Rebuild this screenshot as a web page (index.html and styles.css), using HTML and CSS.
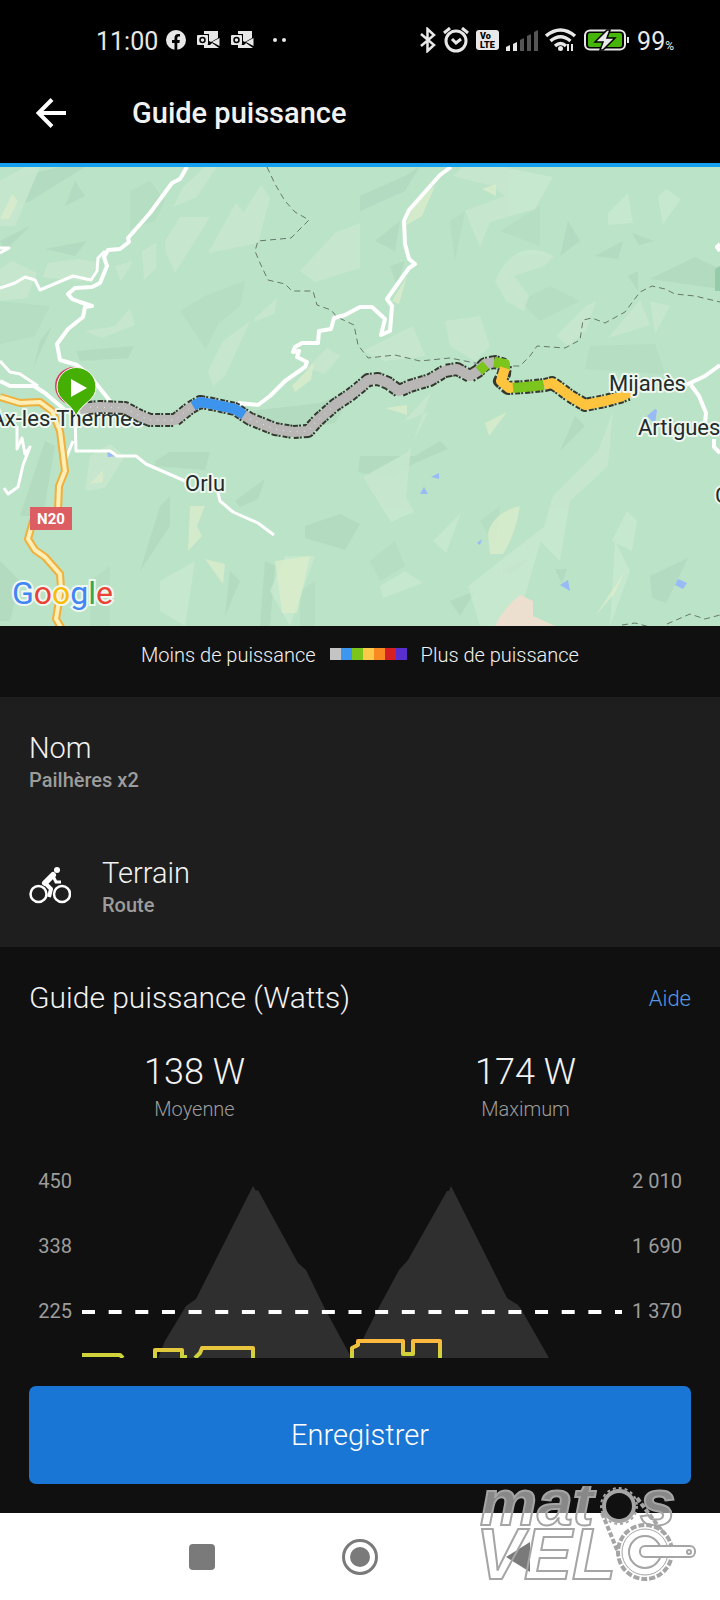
FILE: index.html
```html
<!DOCTYPE html>
<html lang="fr">
<head>
    <meta charset="UTF-8">
    <meta name="viewport" content="width=device-width, initial-scale=1.0">
    <title>Guide puissance</title>
    <link rel="stylesheet" href="styles.css">
</head>
<body>
    <div class="status-bar">
        <div class="status-left">
            <span class="clock">11:00</span>
            <svg width="20" height="20" viewBox="0 0 20 20"><circle cx="10" cy="10" r="10" fill="#e8e8e8"/><path d="M8.500 20v-7H6v-3h2.500V8c0-2.600 1.500-4 3.800-4 .8 0 1.700.1 1.700.1v2.500h-1.200c-1.100 0-1.500.7-1.500 1.400v2h2.500l-.4 3h-2.100v7z" fill="#000"/></svg>
            <svg class="mail" width="23" height="18" viewBox="0 0 23 18"><use href="#outlook"/></svg>
            <svg class="mail" width="23" height="18" viewBox="0 0 23 18">
                <g id="outlook">
                    <path d="M7 0h14v7l-7 4-2-1V3H7zM7 14h6l2-2 7 5H7z" fill="#e8e8e8"/>
                    <path d="M22.500 7v8L15 11z" fill="#e8e8e8"/>
                    <rect x="0" y="4" width="11" height="10" rx="1" fill="#e8e8e8"/>
                    <circle cx="5.500" cy="9" r="2.500" fill="none" stroke="#000" stroke-width="1.500"/>
                </g>
            </svg>
            <svg class="dots" width="16" height="6" viewBox="0 0 16 6" fill="#e8e8e8"><circle cx="3" cy="3" r="2"/><circle cx="12" cy="3" r="2"/></svg>
        </div>
        <div class="status-right">
            <svg width="16" height="26" viewBox="0 0 16 26" fill="none" stroke="#e8e8e8" stroke-width="2.500"><path d="M1 7l13 11-6.500 6V2L14 8 1 19"/></svg>
            <svg width="26" height="26" viewBox="0 0 26 26" fill="none" stroke="#e8e8e8" stroke-width="3"><circle cx="13" cy="14" r="10"/><path d="M1 6l6-5M25 6l-6-5M9 12l4 4 5-4"/></svg>
            <svg width="23" height="20" viewBox="0 0 23 20"><rect width="23" height="20" rx="3" fill="#e8e8e8"/><text class="volte" x="4" y="9">Vo</text><text class="volte" x="4" y="18">LTE</text></svg>
            <svg width="32" height="21" viewBox="0 0 32 21"><path d="M0 17l4-2v6H0zM7 14l4-2v9H7z" fill="#e8e8e8"/><path d="M14 10l4-2v13h-4zM21 6l4-2v17h-4zM28 2l4-2v21h-4z" fill="#555"/></svg>
            <svg width="32" height="24" viewBox="0 0 32 24" fill="none" stroke="#e8e8e8" stroke-width="3.500"><path d="M1 8Q15.500-4 30 8M5.500 13q10-8.500 20 0M10 18q5.500-5 11 0"/><circle cx="15.500" cy="20.500" r="2.500" fill="#e8e8e8" stroke="none"/><path d="M23 16v7M27 16v7" stroke-width="2"/></svg>
            <svg width="46" height="22" viewBox="0 0 46 22"><rect x="1" y="1.500" width="40" height="19" rx="5" fill="none" stroke="#e8e8e8" stroke-width="2"/><rect x="4" y="4" width="34" height="14" rx="2" fill="#46b50a"/><rect x="43" y="8" width="2" height="6" fill="#e8e8e8"/><path d="M23 1L11 13h8l-3 8h3l12-12h-8l3-8z" fill="#e8e8e8" stroke="#000" stroke-width="1.500"/></svg>
            <span class="battery">99<small>%</small></span>
        </div>
    </div>

    <header class="app-header">
        <button class="back" type="button" aria-label="Retour">
            <svg width="30" height="30" viewBox="0 0 30 30" fill="none" stroke="#fff" stroke-width="4"><path d="M30 15H4M16 1.500L2.500 15 16 28.500"/></svg>
        </button>
        <h1>Guide puissance</h1>
    </header>

    <!-- Route map -->
    <svg class="map" viewBox="0 166 720 459" role="img" aria-label="Carte du parcours">
        <rect y="166" width="720" height="459" fill="#bbe3c7"/>

        <!-- Terrain relief -->
        <g fill="#acd6bb" opacity="0.55">
            <path d="M0 180L60 166h25L30 200 0 210zM45 248l42-8-12 15zM0 240l30-15-25 25zM76 350l58-5-6 12-48 3zM40 340l12-15-18 40zM75 180l10 15-20 10z"/>
            <path d="M360 195l45-20 15-10-15 25-45 20zM375 240l25-20-5 30zM390 265l15-5-8 25zM595 255l28-15-5 18zM632 232l22 8-15 4zM650 278l70 10v-20l-25-12zM628 275l10-5v20zM580 240l-12-20-8 35z"/>
            <path d="M155 460l15-9h40l-5 18-50-4zM235 500l30-22-7 20-18 8zM305 525l35-12 20 10-15 26-40-12zM250 410l70-8 35-15-20 35-50 10zM20 515l25-75 10 5-12 70zM160 505l10-10v30l-30 45z"/>
            <path d="M360 455h55l25-15 8 8-35 15-20 15-35-7zM500 570l28-12-15 15zM555 568h12l-5 15zM450 600l25-10-15 25zM265 560l10 5-5 60h-10zM230 570l10 10-15 35zM0 560l20 20-10 40H0zM650 575l38-18-22 45-14-5zM560 450l25-25-10-10z"/>
        </g>
        <g fill="#b3dcc1" opacity="0.7">
            <path d="M130 190l20-10 15 20-10 20-25 8zM180 310l25-15 40-15-5 25-22 18-12 25zM0 300l50 5-15 30-35 8zM500 230l40-25v40zM520 300l30-15 30 15-40 20zM590 345l65-2 10 30-80-5zM450 220l15-10-10 50zM90 580l20-15v60H90zM480 520l20-15-5 40zM370 560l25-20 10 25-25 15zM300 590l15-10v45h-15z"/>
        </g>
        <g fill="#c9e9cf" opacity="0.8">
            <path d="M208 252l28-50 8 9 17-27 9 13-12 45zM165 240l15-24h30l-35 56-9-20zM142 250l14-8v25l-12 12zM173 206l10-20 22-20h12l-20 30zM0 180l25-14h15L15 225H0z"/>
            <path d="M48 262l30-4 20 3-10 20-45-5zM0 268l12-8 25 12-10 25-27 3zM85 330l30-5 15-18 5 17-33 13zM115 265l18-5-12 20zM213 385l-5-15 15-30 27-20-25 55zM255 317l22-20-3 16-20 8zM300 270l35-38 25-10v45l-45 14zM340 355l-15 18-18-6 20-20z"/>
            <path d="M465 210l40-15-12-10-40-10 10-9h40l50 10-18 32-45 13-10 25zM495 280q20-45 59-25l-10 10-30 10 15 20-5 15-18-10zM608 212l20-20 5 30-25 2zM658 196l8-8 15 10-18 25zM445 320l35-5 10 30-15 15-25-15zM556 335l30-30 10-5-10 30-18 15zM608 337l32-38 10 25zM650 300l20 5-15 28z"/>
            <path d="M363 350l50-25 12 30-40 5zM363 476l45-25 20-40-25 10 28-30-20 55-5 50 8 15-23 10zM545 525l-20 70-25 30h-20l-12-40zM553 495l45-45 15-40-5 55-38 35-10 60-20-20zM612 540l15-30 10 10-5 30zM380 585l25-15 18 12-40 15zM433 540l28-28-15 40zM160 580l35-20-10 65-25-15zM615 540l15 30-20 55zM270 590l15-35h30l-25 70zM90 455l20-12 15 12-20 32-20 3z"/>
        </g>
        <g fill="#d9eccb" opacity="0.8">
            <path d="M0 218l12-25 6 7-9 18zM405 225l10-25 20-15-13 30zM482 188l14-5v12zM392 300l15-25-8 28zM292 385l22-23-3 17-16 12zM190 505h15l-8 20 5 10-14 15zM90 483l13-14v12zM488 532q5-20 32-27-5 30-17 48h-13zM485 422l22-11-18 24zM205 558l20 5-2 20zM275 560l35-5-13 57h-15zM595 615l30-45-10 22zM385 407l22-3v10z"/>
        </g>
        <path d="M495 625q8-17 25-31l13 6v15l22 10z" fill="#ecdfd0"/>
        <path d="M715 268l5-3v25h-5z" fill="#96cbaa"/>
        <path d="M431 476l8-4v6zM420 493l4-7 4 7zM477 542l5-4-2 6zM560 584l8-5 2 11zM678 578l9 4-4 6-8-4zM647 415l8-7 2 1-2 14zM107 451h4l7 4-10 1z" fill="#98baf5"/>

        <!-- Borders -->
        <g fill="none" stroke="#68776c" stroke-width="1" stroke-dasharray="6 4">
            <path d="M267 166l8 17 10 17 10 11 14 8-18 18-33 3-3 10 5 12 8 17 17 4 7 7h21l4 14 14 5 6 7 17 8 4 20 10 13 27-3 25 6 30-3 40 8h30l10-10 7-10 28 2 15-8 3-20 9-2 13 5 20-11 15-20 12-6 13 3 10 5 20 2 25 6"/>
            <path d="M622 624l13-2 15 4M667 623l23-10 15 5 15-4"/>
        </g>

        <!-- Small roads -->
        <g class="road">
            <path d="M187 166l-7 12-8 4-22 30-22 25 1 4-9 7-12 1-4 7 3 9-7 17-8 4-17 1-7 6 4 5 8 3 12 4-7 1-2 10-15 12-11 15 3 16 17 5 13 11 20 25"/>
            <path d="M238 402l20 2 12-9 15-15 20-14 2-5-10-5 2-6-6 1 2-5 7-4h16l1-12 12-2 3-11 11-3 15-8h12l13 12-4 16 9-4 2-25-5-7 12-17 10-14 6-4-6-5-4-15-1-23 5-11 31-35 11-8"/>
            <path d="M0 380l10 5h24l11 7 20 17M686 384l19-9 15-11M691 384l8 11 7 17-1 10M714 438v8l6 6M720 250l-3-4 3-3"/>
        </g>
        <g class="road thin">
            <path d="M105 250l-7 7-1 13-6 9-18-4-33 14-5-10-10-3-10 6-15 5M0 247h9l-9 5M0 360l10 11 10 2 18 12M17 425v23l5-11 3 16 5-7-7 18-5 22-10 7-4-6M73 440l-8 20M75 415l1 35h34l7 5h19l10 8 39 17M218 492l2 8 13 11 25 11 16 12"/>
        </g>

        <!-- Main road -->
        <path class="road n20-edge" d="M0 396l20 6 20-1 12 9 8 20 5 40-6 15-1 25-25 10-5 18 7 11 10 7 15 17 1 15-5 30 6 10"/>
        <path class="road n20-fill" d="M0 396l20 6 20-1 12 9 8 20 5 40-6 15-1 25-25 10-5 18 7 11 10 7 15 17 1 15-5 30 6 10"/>
        <rect x="30" y="506" width="42" height="23" fill="#dc5d62"/>
        <text class="shield" x="51" y="523">N20</text>

        <text class="place" x="143" y="425" text-anchor="end">Ax-les-Thermes</text>

        <!-- Power track: dark edge first, coloured segments on top -->
        <g class="track">
            <path class="track-edge" d="M88 407l12-1 25 1 15 8 10 4h25l15-12 10-6 12 2 23 5 15 10 25 10 18 3 15-1 10-11 17-15 15-10 10-8 8-7 10-1 10 4 11 8 11-5 20-6 15-9 12-2 13 7 8-5 7-7 10-2 10 3-1 9-4 7 8 7 17-1 20-2 7-2 6 4 12 9 15 9 20-4 15-4 8-3"/>
            <path stroke="#b9b6b6" d="M80 408l20-2 25 1 15 8 10 4h25l15-12 10-6 12 2 23 5 15 10 25 10 18 3 15-1 10-11 17-15 15-10 10-8 8-7 10-1 10 4 11 8 11-5 20-6 15-9 12-2 13 7 8-5 7-7 10-2"/>
            <path stroke="#3d94ec" d="M193 405l7-4 12 2 23 5 9 6"/>
            <path stroke="#7bc51c" d="M479 370l7-6M494 361l11 2v7"/>
            <path stroke="#ffc43d" d="M505 367l-4 13 8 7 6-1"/>
            <path stroke="#7bc51c" d="M513 387l12-1 19-2"/>
            <path stroke="#ffc43d" d="M544 384l8-2 6 4 12 9 15 9 20-4 15-4 10-5"/>
            <path class="track-dots" d="M90 406l35 1 15 8 10 4h25l15-12M250 418l25 10 18 3 15-1 10-11 17-15"/>
        </g>

        <text class="place" x="185" y="490">Orlu</text>
        <text class="place" x="609" y="390">Mijanès</text>
        <text class="place" x="638" y="434">Artigues</text>
        <text class="place" x="715" y="502">C</text>

        <!-- Start marker -->
        <circle cx="74" cy="385" r="18" fill="#fff" stroke="#dd3d60" stroke-width="2"/>
        <path d="M76 415C71 401 57 400 57 386a19 19 0 0 1 39 0c0 14-14 15-20 29z" fill="#46af04" stroke="#fff" stroke-width="1"/>
        <path d="M71 378l16 9-16 9z" fill="#fff"/>

        <text class="google" x="12" y="603"><tspan fill="#4285f4">G</tspan><tspan fill="#ea4335">o</tspan><tspan fill="#fbbc05">o</tspan><tspan fill="#4285f4">g</tspan><tspan fill="#34a853">l</tspan><tspan fill="#ea4335">e</tspan></text>
    </svg>

    <div class="legend">
        <span>Moins de puissance</span>
        <div class="scale">
            <i class="s1"></i><i class="s2"></i><i class="s3"></i><i class="s4"></i><i class="s5"></i><i class="s6"></i><i class="s7"></i>
        </div>
        <span>Plus de puissance</span>
    </div>

    <section class="details">
        <div class="detail">
            <div class="detail-text">
                <h2>Nom</h2>
                <p>Pailhères x2</p>
            </div>
        </div>
        <div class="detail">
            <svg width="42" height="38" viewBox="0 0 42 38" fill="none" stroke="#fff">
                <circle cx="9.500" cy="28" r="8" stroke-width="2.500"/>
                <circle cx="33" cy="28" r="8" stroke-width="2.500"/>
                <circle cx="28" cy="4" r="3" fill="#fff" stroke="none"/>
                <path d="M24 9l-8 8" stroke-width="6" stroke-linecap="round"/>
                <path d="M16 17l6 6-2 8" stroke-width="4" stroke-linejoin="round"/>
                <path d="M24 10l3 6h5" stroke-width="3"/>
            </svg>
            <div class="detail-text">
                <h2>Terrain</h2>
                <p>Route</p>
            </div>
        </div>
    </section>

    <main class="power">
        <div class="power-title">
            <h2>Guide puissance (Watts)</h2>
            <a href="#aide">Aide</a>
        </div>
        <div class="stats">
            <div class="stat"><strong>138 W</strong><span>Moyenne</span></div>
            <div class="stat"><strong>174 W</strong><span>Maximum</span></div>
        </div>
        <div class="chart">
            <div class="axis"><span>450</span><span>338</span><span>225</span></div>
            <svg class="plot" viewBox="0 0 540 209" role="img" aria-label="Puissance et altitude">
                <defs>
                    <linearGradient id="watts" gradientUnits="userSpaceOnUse" x1="0" y1="192" x2="0" y2="208">
                        <stop offset="0" stop-color="#ffb93e"/>
                        <stop offset="1" stop-color="#c9d63c"/>
                    </linearGradient>
                </defs>
                <path d="M76 209L83 192 104 157 114 150 118 142 171 37 174 42 176 41 216 114 224 121 243 160 268 206 280 192 296 160 317 121 326 111 365 42 367 42 369 37 425 149 436 156 439 160 467 209z" fill="#2f2f2f"/>
                <path d="M0 163h540" stroke="#fff" stroke-width="4" stroke-dasharray="13 13.650"/>
                <g fill="none" stroke="url(#watts)" stroke-width="4" stroke-linejoin="round">
                    <path d="M0 206h38l3 3M73 211v-10h27v7h5M113 209l5-5 2-5h51v12M270 211v-12l6-3v-4h45v13h10v-13h27v19"/>
                </g>
            </svg>
            <div class="axis"><span>2 010</span><span>1 690</span><span>1 370</span></div>
        </div>
        <button class="save" type="button">Enregistrer</button>
    </main>

    <nav class="system-nav">
        <button type="button" aria-label="Applications récentes"><svg width="36" height="36" viewBox="0 0 36 36"><rect x="5" y="5" width="26" height="26" rx="4" fill="#7a7a7a"/></svg></button>
        <button type="button" aria-label="Accueil"><svg width="36" height="36" viewBox="0 0 36 36"><circle cx="18" cy="18" r="16.500" fill="none" stroke="#7a7a7a" stroke-width="3"/><circle cx="18" cy="18" r="10" fill="#7a7a7a"/></svg></button>
        <button type="button" aria-label="Précédent"><svg width="36" height="36" viewBox="0 0 36 36"><path d="M6 18L30 3v30z" fill="#7a7a7a"/></svg></button>
    </nav>

    <!-- Site watermark -->
    <svg class="watermark" width="224" height="100" viewBox="0 0 224 100">
        <text class="mark matos" x="4" y="39">mat</text>
        <text class="mark matos" x="164" y="39">s</text>
        <text class="mark velo" x="0" y="93">VEL</text>
        <g fill="none" stroke="#a5a5a5">
            <circle cx="143" cy="20" r="15" stroke-width="4" fill="#101010"/>
            <circle cx="143" cy="20" r="18" stroke-width="2" stroke-dasharray="3 3"/>
            <path d="M126 27l20 49M161 12l34 45" stroke-width="4" stroke-dasharray="5 2"/>
            <circle cx="169" cy="66" r="27" stroke-width="4" stroke-dasharray="6 2" fill="#fff"/>
            <circle cx="169" cy="66" r="23" stroke-width="1"/>
            <circle cx="169" cy="66" r="16" stroke-width="2"/>
            <rect x="164" y="60" width="55" height="11" rx="5" fill="#fff" stroke-width="2"/>
            <circle cx="213" cy="66" r="2" stroke-width="2"/>
        </g>
    </svg>
</body>
</html>
```
FILE: styles.css
```css
:root {
    --bg: #101010;
    --bg-card: #1e1e1e;
    --blue: #1976d4;
    --line-blue: #14a0ef;
    --link: #5597e2;
    --text: #f2f2f2;
    --text-muted: #9c9c9c;
    --icon: #e8e8e8;
}

* {
    box-sizing: border-box;
}

body {
    position: relative;
    display: flex;
    flex-direction: column;
    min-height: 100vh;
    margin: 0;
    background-color: var(--bg);
    color: var(--text);
    font-family: Roboto, "Liberation Sans", sans-serif;
    font-weight: 300;
    overflow-x: hidden;
}

svg {
    display: block;
    flex-shrink: 0;
}

h1,
h2,
p {
    margin: 0;
}

button {
    padding: 0;
    border: 0;
    background: none;
    color: inherit;
    font: inherit;
}

/* Status bar */
.status-bar {
    display: flex;
    justify-content: space-between;
    align-items: center;
    height: 80px;
    padding: 0 46px 0 96px;
    background-color: #000;
    color: var(--icon);
    font-weight: 400;
}

.status-left {
    display: flex;
    align-items: center;
    gap: 8px;
}

.status-right {
    display: flex;
    align-items: center;
    gap: 7px;
}

.clock,
.battery {
    padding-top: 4px;
    font-size: 25px;
    line-height: 32px;
}

.battery small {
    font-size: 12px;
    line-height: 1;
}

.mail {
    margin-left: 3px;
}

.dots {
    margin-left: 10px;
}

.volte {
    font-size: 9px;
    font-weight: 900;
    fill: #000;
}

/* Header */
.app-header {
    display: flex;
    align-items: center;
    gap: 66px;
    height: 87px;
    padding: 0 36px 18px;
    background-color: #000;
    border-bottom: 4px solid var(--line-blue);
}

.app-header h1 {
    font-size: 29px;
    line-height: 36px;
    font-weight: 500;
}

/* Map */
.map {
    width: 100%;
    height: auto;
}

.road {
    fill: none;
    stroke: #fff;
    stroke-width: 4;
    stroke-linejoin: round;
}

.thin {
    stroke-width: 3;
}

.n20-edge {
    stroke: #f0b03c;
    stroke-width: 8;
}

.n20-fill {
    stroke: #ffeeb5;
    stroke-width: 4;
}

.track path {
    fill: none;
    stroke-width: 10;
    stroke-linejoin: round;
}

.track .track-edge {
    stroke: #34382f;
    stroke-width: 14;
    stroke-dasharray: 5 1 2 2;
}

.track .track-dots {
    stroke: #e6e6e6;
    stroke-width: 1;
    stroke-dasharray: 1 6;
}

.place {
    font-size: 22px;
    font-weight: 400;
    fill: #232b2b;
    stroke: #eef8f0;
    stroke-width: 4;
    stroke-linejoin: round;
    paint-order: stroke;
}

.shield {
    font-size: 15px;
    font-weight: 700;
    fill: #fff;
    text-anchor: middle;
}

.google {
    font-size: 32px;
    font-weight: 400;
    stroke: #eef8f0;
    stroke-width: 4;
    paint-order: stroke;
}

/* Legend */
.legend {
    display: flex;
    justify-content: center;
    gap: 14px;
    height: 71px;
    padding-top: 16px;
    font-size: 20px;
    line-height: 26px;
}

.scale {
    display: flex;
    margin-top: 6px;
}

.scale i {
    width: 11px;
    height: 12px;
}

.s1 { background-color: #c4c4c4; }
.s2 { background-color: #3d97f0; }
.s3 { background-color: #7cc51d; }
.s4 { background-color: #fcc94a; }
.s5 { background-color: #f98a22; }
.s6 { background-color: #d51f22; }
.s7 { background-color: #5a2fd0; }

/* Details */
.details {
    background-color: var(--bg-card);
}

.detail {
    display: flex;
    align-items: center;
    gap: 31px;
    height: 125px;
    padding: 0 29px;
}

.detail-text {
    padding-top: 4px;
}

.detail h2 {
    font-size: 29px;
    line-height: 36px;
    font-weight: 300;
}

.detail p {
    color: var(--text-muted);
    font-size: 20px;
    line-height: 28px;
    font-weight: 500;
}

/* Power guide */
.power {
    display: flex;
    flex: 1;
    flex-direction: column;
    padding: 31px 29px 29px;
}

.power-title {
    display: flex;
    justify-content: space-between;
    align-items: center;
}

.power-title h2 {
    font-size: 30px;
    line-height: 40px;
    font-weight: 300;
}

.power-title a {
    color: var(--link);
    font-size: 22px;
    text-decoration: none;
}

.stats {
    display: grid;
    grid-template-columns: 1fr 1fr;
    padding-top: 30px;
    text-align: center;
}

.stat strong,
.stat span {
    display: block;
}

.stat strong {
    font-size: 36px;
    line-height: 48px;
    font-weight: 300;
}

.stat span {
    color: var(--text-muted);
    font-size: 20px;
    line-height: 26px;
}

.chart {
    display: grid;
    grid-template-columns: 43px 1fr 49px;
    gap: 10px;
    margin-top: 27px;
    padding-right: 10px;
}

.axis {
    color: var(--text-muted);
    font-size: 20px;
    line-height: 65px;
    font-weight: 400;
    text-align: right;
    white-space: nowrap;
}

.axis span {
    display: block;
}

.plot {
    width: 100%;
    height: auto;
}

.save {
    height: 98px;
    margin-top: auto;
    border-radius: 7px;
    background-color: var(--blue);
    color: #fff;
    font-size: 29px;
}

/* System navigation */
.system-nav {
    display: flex;
    justify-content: center;
    align-items: center;
    gap: 122px;
    height: 87px;
    background-color: #fff;
}

.watermark {
    position: absolute;
    right: 20px;
    bottom: 14px;
    pointer-events: none;
}

.mark {
    font-family: "Liberation Sans", sans-serif;
    font-style: italic;
    font-weight: 700;
    stroke: #a5a5a5;
    stroke-width: 2;
}

.matos {
    font-size: 64px;
    fill: rgba(255, 255, 255, 0.5);
}

.velo {
    font-size: 72px;
    fill: none;
}
```
